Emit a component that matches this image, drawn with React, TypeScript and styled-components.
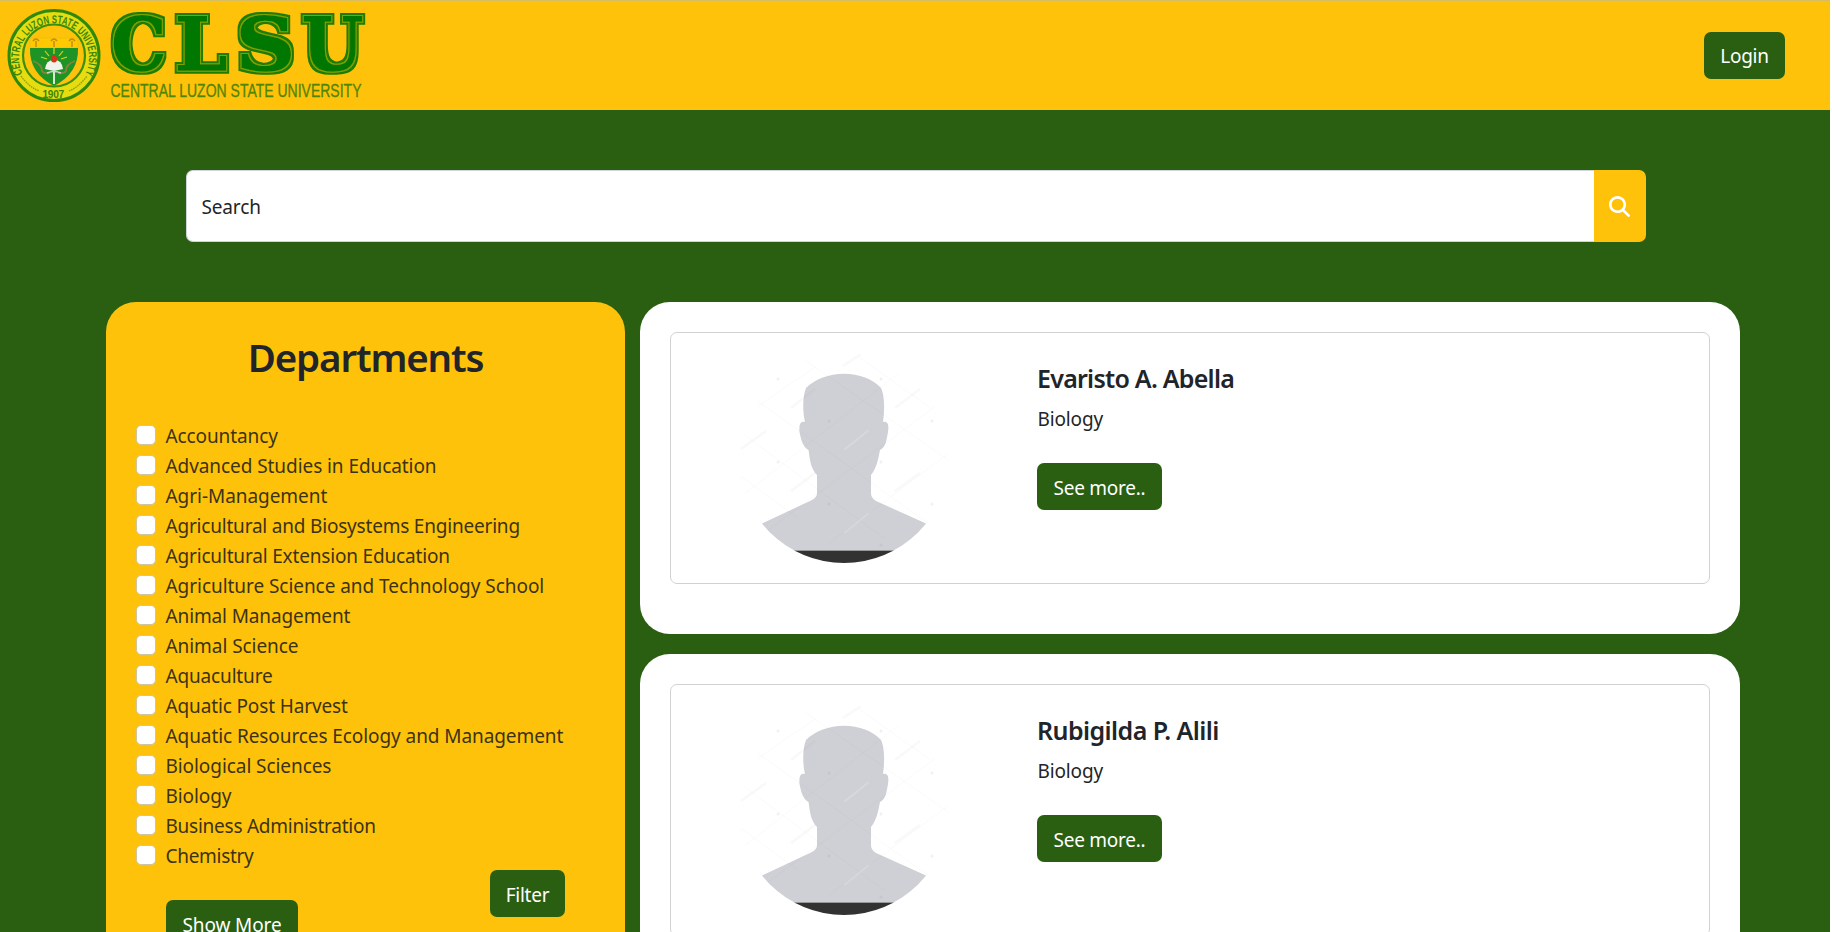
import React from "react";
import styled, { createGlobalStyle } from "styled-components";

const green = "#2a5f12";
const gold = "#ffc20a";

const GlobalStyle = createGlobalStyle`
  *, *::before, *::after { box-sizing: border-box; }
  html, body { margin: 0; padding: 0; background: #fff; overflow: hidden; }
  body {
    font-family: "Noto Sans", "Open Sans", sans-serif;
    font-size: 19px;
    line-height: 30px;
    letter-spacing: -0.27px;
    color: #212529;
  }
`;

const Page = styled.div`
  width: 1830px;
  height: 932px;
  overflow: hidden;
  background: ${green};
`;

const Header = styled.header`
  display: flex;
  align-items: center;
  justify-content: space-between;
  height: 110px;
  padding-right: 45px;
  background: ${gold};
  border-top: 1px solid #d6bd62;
`;

const Logo = styled.svg`
  display: block;
  width: 380px;
  height: 109px;
`;

const Button = styled.button<{ $width: number }>`
  flex: none;
  width: ${(p) => p.$width}px;
  height: 47px;
  padding: 2px 0 0;
  border: 0;
  border-radius: 7px;
  background: ${green};
  color: #fff;
  font: inherit;
  letter-spacing: -0.25px;
  white-space: nowrap;
`;

const LoginButton = styled(Button)`
  padding-top: 1px;
`;

const SearchBar = styled.form`
  display: flex;
  width: 1460px;
  height: 72px;
  margin: 60px 0 60px 186px;
`;

const SearchInput = styled.input`
  flex: 1;
  min-width: 0;
  padding: 2px 14.5px 0;
  border: 1px solid #ced4da;
  border-right: 0;
  border-radius: 7px 0 0 7px;
  background: #fff;
  color: #212529;
  font: inherit;
  letter-spacing: -0.15px;
  outline: 0;
  &::placeholder { color: #212529; opacity: 1; }
`;

const SearchButton = styled.button`
  display: flex;
  align-items: center;
  justify-content: center;
  width: 52px;
  padding: 1px 1px 0 0;
  border: 0;
  border-radius: 0 7px 7px 0;
  background: ${gold};
`;

const Content = styled.main`
  display: grid;
  grid-template-columns: 519px 1100px;
  column-gap: 15px;
  padding-left: 106px;
`;

const Sidebar = styled.aside`
  height: 760px;
  padding: 30px;
  border-radius: 30px;
  background: ${gold};
`;

const SidebarTitle = styled.h1`
  margin: 0 0 40px;
  padding-top: 1px;
  height: 48px;
  font-size: 38.5px;
  font-weight: 600;
  line-height: 48px;
  letter-spacing: -1.15px;
  text-align: center;
  color: #212529;
`;

const DepartmentList = styled.ul`
  margin: 0;
  padding: 0;
  list-style: none;
`;

const Department = styled.label<{ $spacing: number }>`
  display: flex;
  align-items: center;
  gap: 9.5px;
  height: 30px;
  color: #3b3314;
  letter-spacing: ${(p) => p.$spacing}px;
  white-space: nowrap;
  span { padding-top: 2px; }
`;

const Checkbox = styled.input`
  appearance: none;
  flex: none;
  width: 20px;
  height: 20px;
  margin: 0;
  border: 1px solid #cfc6a0;
  border-radius: 5px;
  background: #fff;
`;

const SidebarActions = styled.div`
  display: flex;
  align-items: flex-start;
  justify-content: space-between;
  padding: 0 30px;
`;

const ShowMore = styled(Button)`
  margin-top: 30px;
  letter-spacing: -0.1px;
`;

const Results = styled.section`
  display: flex;
  flex-direction: column;
  gap: 20px;
`;

const ResultCard = styled.article`
  flex: none;
  height: 332px;
  padding: 30px;
  border-radius: 30px;
  background: #fff;
`;

const Profile = styled.div`
  display: flex;
  height: 252px;
  border: 1px solid #d0d1d3;
  border-radius: 7px;
`;

const Portrait = styled.div`
  display: flex;
  justify-content: center;
  width: 346px;
  padding-top: 20px;
`;

const Details = styled.div`
  display: flex;
  flex-direction: column;
  align-items: flex-start;
  padding: 30px 0 0 20px;
`;

const Name = styled.h2<{ $spacing: number }>`
  margin: 0 0 11px;
  font-size: 25px;
  font-weight: 600;
  line-height: 30px;
  letter-spacing: ${(p) => p.$spacing}px;
`;

const Field = styled.p`
  margin: 0 0 29px;
  padding-left: 0.5px;
  letter-spacing: -0.15px;
`;

const departments = [
  { name: "Accountancy", spacing: -0.1 },
  { name: "Advanced Studies in Education", spacing: -0.07 },
  { name: "Agri-Management", spacing: -0.05 },
  { name: "Agricultural and Biosystems Engineering", spacing: -0.2 },
  { name: "Agricultural Extension Education", spacing: -0.17 },
  { name: "Agriculture Science and Technology School", spacing: -0.05 },
  { name: "Animal Management", spacing: -0.12 },
  { name: "Animal Science", spacing: -0.06 },
  { name: "Aquaculture", spacing: -0.16 },
  { name: "Aquatic Post Harvest", spacing: -0.13 },
  { name: "Aquatic Resources Ecology and Management", spacing: -0.08 },
  { name: "Biological Sciences", spacing: -0.07 },
  { name: "Biology", spacing: -0.1 },
  { name: "Business Administration", spacing: -0.25 },
  { name: "Chemistry", spacing: -0.3 },
];

const people = [
  { name: "Evaristo A. Abella", field: "Biology", spacing: -0.75 },
  { name: "Rubigilda P. Alili", field: "Biology", spacing: -0.57 },
];

const letters = [
  { char: "C", x: 111.5, width: 54.5 },
  { char: "L", x: 175, width: 52 },
  { char: "S", x: 236, width: 59 },
  { char: "U", x: 302, width: 61 },
];

function UniversityLogo() {
  return (
    <Logo viewBox="0 1 380 109" role="img" aria-label="Central Luzon State University">
      <defs>
        <path id="sealArc" d="M 22.5 73.500 A 35 35 0 1 1 85.5 73.500" />
        <filter id="varsity" x="-20%" y="-10%" width="140%" height="120%">
          <feMorphology in="SourceAlpha" operator="dilate" radius="3" result="outer" />
          <feFlood floodColor="#1d7d02" />
          <feComposite in2="outer" operator="in" result="rim" />
          <feMorphology in="SourceAlpha" operator="dilate" radius="1" result="inner" />
          <feFlood floodColor="#7da305" />
          <feComposite in2="inner" operator="in" result="line" />
          <feMerge>
            <feMergeNode in="rim" />
            <feMergeNode in="line" />
            <feMergeNode in="SourceGraphic" />
          </feMerge>
        </filter>
      </defs>
      <circle cx="54" cy="55.5" r="45" fill="#e6dc10" stroke="#2f8a0c" strokeWidth="3" />
      <circle cx="54" cy="55.5" r="31" fill={gold} stroke="#3c8f0c" strokeWidth="2.2" />
      <text fontFamily="Liberation Sans" fontWeight="700" fontSize="11.5" fill="#3a8609" letterSpacing="0">
        <textPath href="#sealArc" textLength="142" lengthAdjust="spacingAndGlyphs">
          CENTRAL LUZON STATE UNIVERSITY
        </textPath>
      </text>
      <path d="M21 76 Q29 87 39 91 M69 91 Q79 87 87 76" fill="none" stroke="#8fa30b" strokeWidth="1.3" strokeDasharray="1.6 0.8" />
      <text x="42.5" y="97.5" textLength="21.500" lengthAdjust="spacingAndGlyphs" fontFamily="Liberation Sans" fontWeight="700" fontSize="11" fill="#3a8609">
        1907
      </text>
      <path d="M30 38 H78 V48 H30 Z" fill="#ffc800" stroke="#d9c01c" strokeWidth="0.6" />
      <path d="M36 47 V41 M33 41 Q36 37 39 41 M54 47 V41 M51 41 Q54 37 57 41 M72 47 V41 M69 41 Q72 37 75 41" stroke="#c78b12" strokeWidth="1.5" fill="none" />
      <path d="M30 48 H78 Q79 73 54 86 Q29 73 30 48 Z" fill="#1e9427" />
      <path d="M54 48 V54 M45 51 L49 56 M63 51 L59 56 M41 57 L47 59 M67 57 L61 59" stroke="#d8d51b" strokeWidth="1.2" />
      <path d="M33 61 Q42 64 42 71 Q44 74 50 73 M75 61 Q66 64 66 71 Q64 74 58 73" stroke="#8b823a" strokeWidth="1.8" fill="none" />
      <path d="M45 69 Q46 60 54 60 Q62 60 63 69 L54 71 Z" fill="#f2f2ed" />
      <path d="M54 70 V84" stroke="#d8e8d4" strokeWidth="2" />
      <path d="M47 73 Q54 70 61 73" stroke="#d6d6d0" strokeWidth="1.4" fill="none" />
      <ellipse cx="54" cy="59" rx="3" ry="3.5" fill="#d93318" />
      <g fontFamily="DejaVu Serif" fontWeight="700" fontSize="72" fill="#067700" stroke="#067700" strokeWidth="1.5" letterSpacing="0" filter="url(#varsity)">
        {letters.map((l) => (
          <text key={l.char} x={l.x} y="69.5" textLength={l.width} lengthAdjust="spacingAndGlyphs">
            {l.char}
          </text>
        ))}
      </g>
      <text x="110.500" y="96.5" textLength="251" lengthAdjust="spacingAndGlyphs" fontFamily="Liberation Sans" fontSize="18" fill="#4f8504" stroke="#4f8504" strokeWidth="0.3" letterSpacing="0">
        CENTRAL LUZON STATE UNIVERSITY
      </text>
    </Logo>
  );
}

function Avatar({ id }: { id: string }) {
  return (
    <svg width="210" height="210" viewBox="0 0 210 210" aria-hidden="true">
      <defs>
        <clipPath id={id}>
          <circle cx="105" cy="105" r="105" />
        </clipPath>
      </defs>
      <g clipPath={`url(#${id})`}>
        <path
          d="M105 20.7 C120 20.7 134 26 142 35 C146 43 145.500 59 144 69 C149 68 150 72 149 79 C147.500 87 147 94 141 97 C139 108 137 116 132 122 V140 C132 144 134 146 137 148 L187 170.500 L220 190 V197 H-10 V190 L23 170.500 L71 148 C75 146 78 144 78 140 V122 C72 116 71 108 69.500 97 C64 94 62 87 60.500 79 C60 72 61 68 66 69 C63.500 59 63.500 43 67 35 C76 26 90 20.700 105 20.700 Z"
          fill="#ced0d5"
        />
        <rect y="197.500" width="210" height="14" fill="#323232" />
        <g stroke="#77777f" strokeOpacity="0.035" strokeWidth="1" fill="none">
          <path d="M66 7 L208 106 M20 49 L190 171 M4 81 L146 186 M0 122 L60 166 M120 4 L190 54" />
          <path d="M76 14 L18 54 M160 20 L4 142 M206 46 L20 184 M209 101 L90 190" />
        </g>
        <g stroke="#999" strokeOpacity="0.06" strokeWidth="2.5">
          <path d="M104 13 L122 1 M156 55 L181 36 M2 96 L27 78 M52 55 L76 36 M52 138 L76 120 M156 138 L181 120" />
        </g>
        <path d="M105 97 L130 77 M105 180 L130 160" stroke="#fff" strokeOpacity="0.18" strokeWidth="2" />
        <g fill="#888" fillOpacity="0.12">
          <circle cx="39" cy="26" r="1.500" />
          <circle cx="142" cy="26" r="1.500" />
          <circle cx="90" cy="68" r="1.500" />
          <circle cx="193" cy="68" r="1.500" />
          <circle cx="39" cy="109" r="1.500" />
          <circle cx="142" cy="109" r="1.500" />
          <circle cx="90" cy="151" r="1.500" />
          <circle cx="193" cy="151" r="1.500" />
          <circle cx="142" cy="192" r="1.500" />
        </g>
      </g>
    </svg>
  );
}

export default function App() {
  return (
    <Page>
      <GlobalStyle />
      <Header>
        <UniversityLogo />
        <LoginButton $width={81}>Login</LoginButton>
      </Header>
      <SearchBar>
        <SearchInput type="text" placeholder="Search" />
        <SearchButton type="button" aria-label="Search">
          <svg width="21" height="21" viewBox="0 0 512 512" fill="#fff">
            <path d="M416 208c0 45.900-14.900 88.300-40 122.700L502.600 457.400c12.500 12.500 12.500 32.800 0 45.300s-32.800 12.500-45.300 0L330.700 376c-34.400 25.200-76.800 40-122.700 40C93.100 416 0 322.900 0 208S93.100 0 208 0S416 93.100 416 208zM208 352a144 144 0 1 0 0-288 144 144 0 1 0 0 288z" />
          </svg>
        </SearchButton>
      </SearchBar>
      <Content>
        <Sidebar>
          <SidebarTitle>Departments</SidebarTitle>
          <DepartmentList>
            {departments.map((department) => (
              <li key={department.name}>
                <Department $spacing={department.spacing}>
                  <Checkbox type="checkbox" />
                  <span>{department.name}</span>
                </Department>
              </li>
            ))}
          </DepartmentList>
          <SidebarActions>
            <ShowMore $width={132}>Show More</ShowMore>
            <Button $width={75}>Filter</Button>
          </SidebarActions>
        </Sidebar>
        <Results>
          {people.map((person, i) => (
            <ResultCard key={person.name}>
              <Profile>
                <Portrait>
                  <Avatar id={`avatar-${i}`} />
                </Portrait>
                <Details>
                  <Name $spacing={person.spacing}>{person.name}</Name>
                  <Field>{person.field}</Field>
                  <Button $width={125}>See more..</Button>
                </Details>
              </Profile>
            </ResultCard>
          ))}
        </Results>
      </Content>
    </Page>
  );
}
